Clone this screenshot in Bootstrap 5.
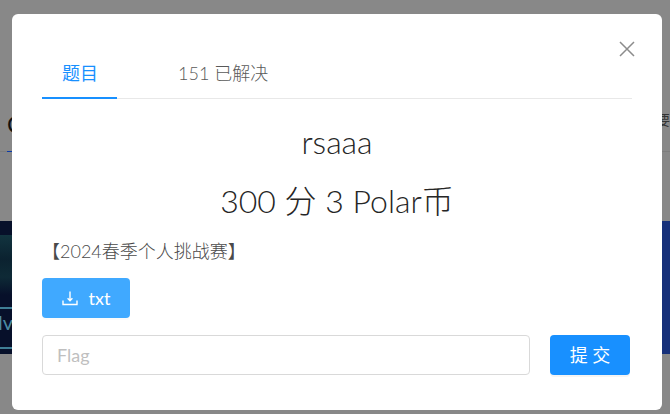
<!DOCTYPE html>
<html lang="zh">
<head>
<meta charset="utf-8">
<title>rsaaa</title>
<link href="https://cdn.jsdelivr.net/npm/bootstrap@5.3.0/dist/css/bootstrap.min.css" rel="stylesheet">
<style>
html,body{height:100%;}
body{background:#888;font-family:Lato,"Noto Sans CJK SC",sans-serif;overflow:hidden;position:relative;width:670px;height:414px;}
.page-under{height:414px;display:flex;flex-direction:column;}
.under-tabs{height:152px;padding-top:106px;border-bottom:1px solid #7d7d7d;display:flex;justify-content:space-between;padding-left:7px;font-size:24px;line-height:36px;color:#111;position:relative;}
.under-tabs .side-txt{font-size:14px;color:#333;line-height:28px;}
.under-mark{position:absolute;left:7px;bottom:-1px;width:5px;height:1px;background:#0b3aa8;}
.under-band{margin-top:69px;height:133px;background:#16307a;display:flex;}
.band-left{width:12px;background:#07102a;color:#4b8aa0;font-size:20px;overflow:hidden;display:flex;flex-direction:column;}
.band-glow{height:60px;margin-top:14px;background:linear-gradient(180deg,#12343f,#0b2230 40%,#0e2a36 70%,#07102a);}
.band-rule{height:2px;background:#3f7f96;margin-top:12px;}
.band-word{line-height:26px;height:26px;margin-left:-2px;}
.dialog-box{position:absolute;left:12px;top:14px;width:650px;height:396px;background:#fff;border-radius:6px;padding:47px 30px 0 30px;}
.dialog-close{position:absolute;right:27px;top:27px;width:16px;height:16px;padding:0;border:0;background:none;line-height:0;}
.tab-row{border-bottom:1px solid #e8e8e8;height:38px;width:590px;gap:41px;}
.tab-item{font-size:18px;font-weight:300;line-height:24px;padding:0 20px;height:38px;color:#595959;}
.tab-item.on{color:#1890ff;font-weight:400;border-bottom:2px solid #1890ff;width:75px;white-space:nowrap;}
.q-name{font-size:32px;line-height:42px;color:#262626;text-align:center;margin:22px 0 0;font-weight:300;width:590px;}
.q-score{font-size:32px;line-height:42px;color:#262626;text-align:center;margin:17px 0 0;font-weight:300;width:590px;}
.q-desc{font-size:18px;font-weight:300;line-height:24px;color:#4a4a4a;margin:17px 0 0;}
.dl-btn{width:88px;height:40px;background:#40a9ff;color:#fff;border:0;border-radius:4px;font-size:18px;margin-top:15px;gap:11px;box-shadow:0 2px 0 rgba(0,0,0,.015);}
.dl-btn:hover{background:#40a9ff;color:#fff;}
.flag-row{margin-top:17px;gap:20px;}
.flag-input{width:488px;height:40px;border:1px solid #d9d9d9;border-radius:4px;font-size:18px;font-weight:400;color:#333;padding:0 14px;font-family:inherit;}
.flag-input::placeholder{color:#bfbfbf;}
.go-btn{width:80px;height:40px;background:#1890ff;color:#fff;border:0;border-radius:4px;font-size:18px;padding:0;box-shadow:0 2px 0 rgba(0,0,0,.045);}
.go-btn:hover{background:#1890ff;color:#fff;}
</style>
</head>
<body>
<div class="page-under">
  <div class="under-tabs"><span>C</span><span class="side-txt">要</span><i class="under-mark"></i></div>
  <div class="under-band"><div class="band-left"><div class="band-glow"></div><div class="band-rule"></div><div class="band-word">lv</div><div class="band-rule"></div></div></div>
</div>
<div class="dialog-box">
  <button class="dialog-close" type="button" aria-label="关闭">
    <svg width="16" height="16" viewBox="0 0 16 16" fill="none" stroke="#8c8c8c" stroke-width="1.5"><path d="M1 1l14 14M15 1L1 15"/></svg>
  </button>
  <div class="tab-row d-flex">
    <div class="tab-item on">题目</div>
    <div class="tab-item">151 已解决</div>
  </div>
  <h4 class="q-name">rsaaa</h4>
  <h4 class="q-score">300 分 3 Polar币</h4>
  <p class="q-desc">【2024春季个人挑战赛】</p>
  <button class="btn dl-btn d-flex align-items-center justify-content-center" type="button">
    <svg width="16" height="16" viewBox="0 0 16 16" fill="none" stroke="#fff" stroke-width="1.4"><path d="M8 1.5v9M5.6 8.3L8 10.7l2.4-2.4"/><path d="M1 10.5v4h14v-4"/></svg>
    <span>txt</span>
  </button>
  <div class="flag-row d-flex">
    <input class="form-control flag-input" type="text" placeholder="Flag">
    <button class="btn go-btn" type="button">提 交</button>
  </div>
</div>
<script src="https://cdn.jsdelivr.net/npm/bootstrap@5.3.0/dist/js/bootstrap.bundle.min.js"></script>
</body>
</html>
